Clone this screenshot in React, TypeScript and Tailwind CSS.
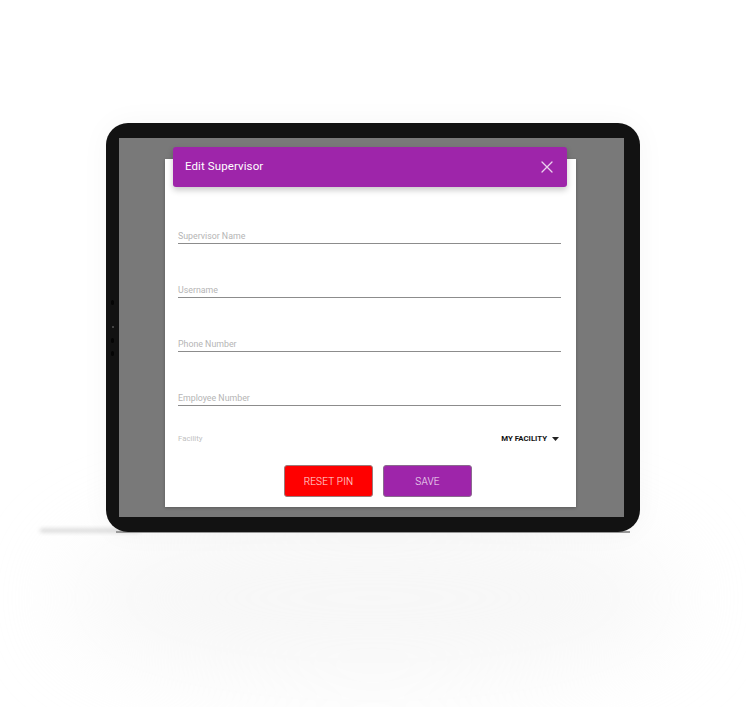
const fields = ["Supervisor Name", "Username", "Phone Number", "Employee Number"];

const Field = ({ label }: { label: string }) => (
  <div className="border-b border-[#8c8c8c] pb-[2px]">
    <div className="text-[8.8px] leading-[10px] text-[#b5b5b5]">{label}</div>
  </div>
);

const CloseIcon = () => (
  <svg width="12" height="12" viewBox="0 0 12 12" className="opacity-80">
    <path d="M1 1L11 11M11 1L1 11" stroke="#fff" strokeWidth="1.3" strokeLinecap="round" />
  </svg>
);

const EditSupervisorDialog = () => (
  <div className="bg-white h-full flex flex-col shadow-[0_1px_3px_rgba(0,0,0,0.25)]">
    <div className="-mt-[12px] mx-[8px] mr-[9px] h-[40px] bg-[#9e25aa] rounded-[3px] shadow-[0_3px_6px_rgba(0,0,0,0.22)] flex items-center justify-between pl-[12px] pr-[14px]">
      <span className="text-white text-[11.5px] tracking-[0.1px]">Edit Supervisor</span>
      <CloseIcon />
    </div>
    <div className="pl-[13px] pr-[15px] pt-[44px] flex flex-col gap-[41px]">
      {fields.map((f) => (
        <Field key={f} label={f} />
      ))}
    </div>
    <div className="pl-[13px] pr-[17px] mt-[27px] h-[12px] flex items-center justify-between">
      <span className="text-[7.8px] text-[#c2c2c2]">Facility</span>
      <span className="flex items-center gap-[5px] text-[7.8px] font-bold text-[#111]">
        MY FACILITY
        <svg width="7" height="4" viewBox="0 0 7 4">
          <path d="M0 0H7L3.5 4Z" fill="#222" />
        </svg>
      </span>
    </div>
    <div className="mt-[20px] pl-[119px] flex gap-[10px]">
      <button className="w-[89px] h-[32px] rounded-[3px] bg-[#ff0000] border border-[#9a7a7a] text-white/90 text-[10px] font-light tracking-[0.2px]">
        RESET PIN
      </button>
      <button className="w-[89px] h-[32px] rounded-[3px] bg-[#9e25aa] border border-[#8a6a8e] text-white/90 text-[10px] font-light tracking-[0.2px]">
        SAVE
      </button>
    </div>
  </div>
);

export default function App() {
  return (
    <div
      className="w-[746px] h-[707px] bg-white relative overflow-hidden"
      style={{ fontFamily: "Roboto, 'Liberation Sans', sans-serif" }}
    >
      <div className="pt-[123px] pl-[106px]">
        <div className="relative w-[534px] h-[409px]">
          {/* floor shadow */}
          <div className="absolute left-[-40px] right-[-40px] top-[390px] h-[170px] rounded-[50%] bg-[#efefef] blur-[45px] opacity-50" />
          <div className="absolute left-[-66px] top-[406px] w-[100px] h-[3px] rounded-full bg-[#aaa] blur-[2px] opacity-60" />
          <div className="absolute left-[10px] right-[10px] top-[408px] h-[2px] bg-[#9a9a9a] blur-[0.5px]" />
          <div className="relative h-full rounded-[22px] bg-[#121212] pl-[13px] pr-[16px] py-[15px] shadow-[0_0_30px_rgba(0,0,0,0.04)]">
            <div className="absolute left-[5px] top-[177px] w-[3px] h-[5px] rounded-full bg-[#050505]" />
            <div className="absolute left-[6px] top-[203px] w-[2px] h-[2px] bg-[#444]" />
            <div className="absolute left-[5px] top-[215px] w-[3px] h-[5px] rounded-full bg-[#050505]" />
            <div className="absolute left-[5px] top-[228px] w-[3px] h-[5px] rounded-full bg-[#050505]" />
            <div className="h-full bg-[#797979] pl-[46px] pr-[48px] pt-[21px] pb-[10px]">
              <EditSupervisorDialog />
            </div>
          </div>
        </div>
      </div>
    </div>
  );
}
